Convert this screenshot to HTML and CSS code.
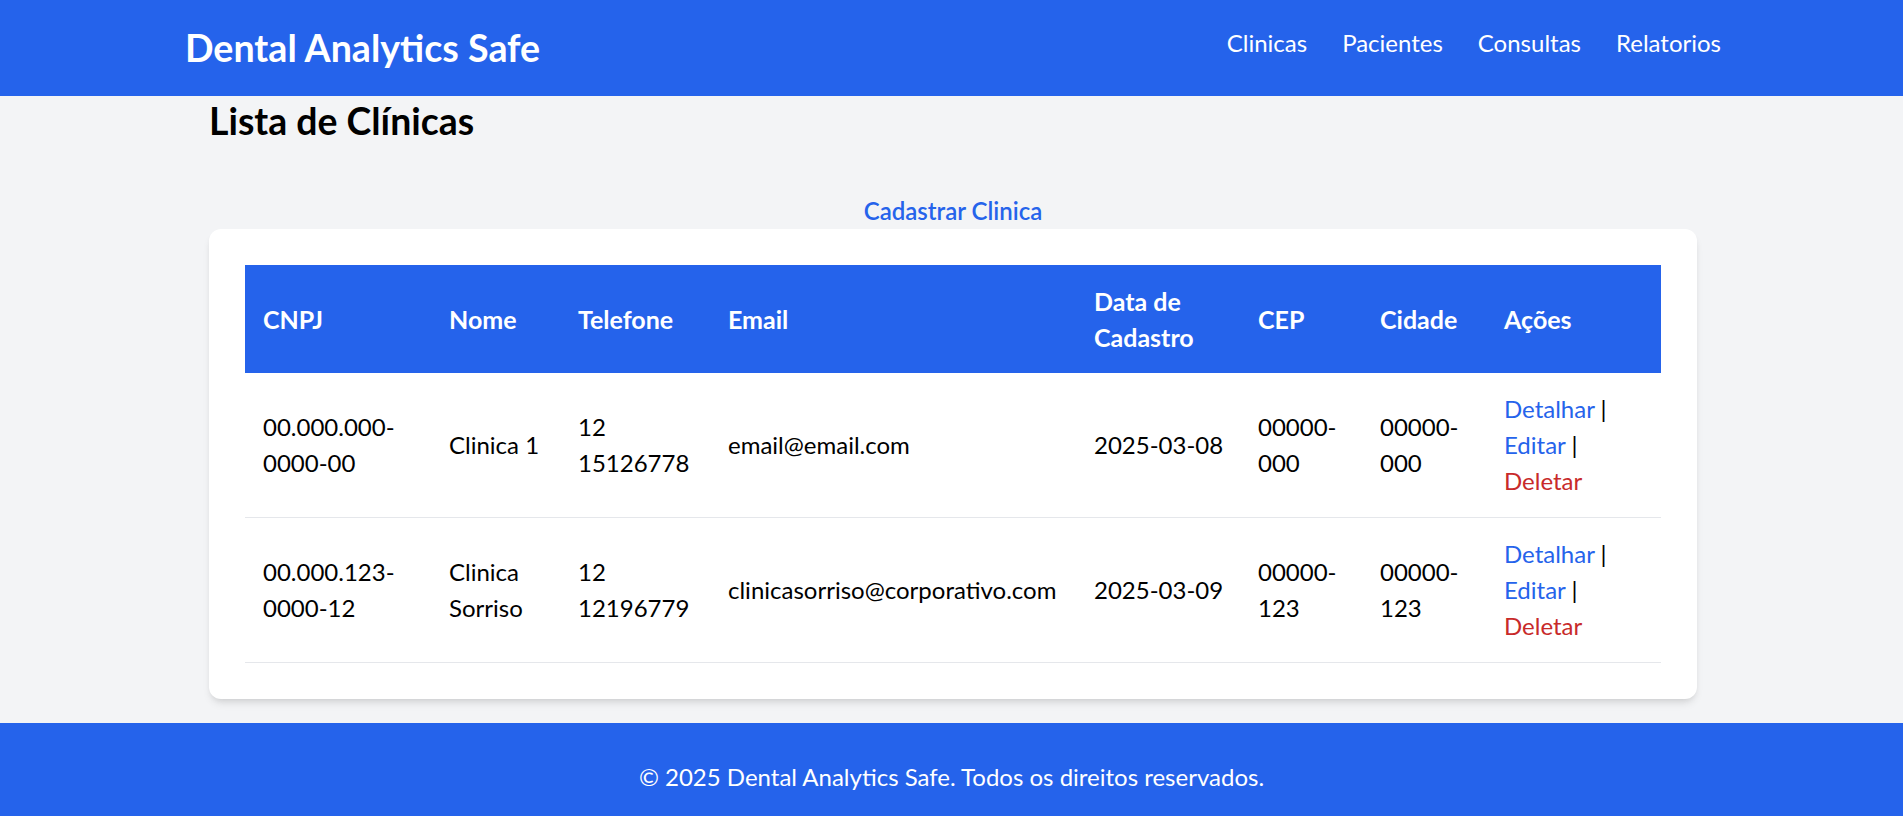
FILE: index.html
```html
<!DOCTYPE html>
<html lang="pt-BR">
<head>
<meta charset="utf-8">
<title>Lista de Clínicas - Dental Analytics Safe</title>
<link rel="stylesheet" href="styles.css">
</head>
<body>
<header class="site-header">
  <div class="header-inner">
    <a class="brand" href="#">Dental Analytics Safe</a>
    <nav class="main-nav">
      <a href="#">Clinicas</a>
      <a href="#">Pacientes</a>
      <a href="#">Consultas</a>
      <a href="#">Relatorios</a>
    </nav>
  </div>
</header>
<main class="page">
  <h1 class="page-title">Lista de Clínicas</h1>
  <div class="top-actions"><a class="add-link" href="#">Cadastrar Clinica</a></div>
  <div class="card">
    <table class="data-table">
      <colgroup>
        <col class="c-cnpj"><col class="c-nome"><col class="c-tel"><col class="c-email"><col class="c-data"><col class="c-cep"><col class="c-cidade"><col class="c-acoes">
      </colgroup>
      <thead>
        <tr><th>CNPJ</th><th>Nome</th><th>Telefone</th><th>Email</th><th>Data de Cadastro</th><th>CEP</th><th>Cidade</th><th>Ações</th></tr>
      </thead>
      <tbody>
        <tr>
          <td>00.000.000-0000-00</td><td>Clinica 1</td><td>12 15126778</td><td>email@email.com</td><td>2025-03-08</td><td>00000-000</td><td>00000-000</td>
          <td><a class="lnk" href="#">Detalhar</a> | <a class="lnk" href="#">Editar</a> | <a class="lnk lnk-del" href="#">Deletar</a></td>
        </tr>
        <tr>
          <td>00.000.123-0000-12</td><td>Clinica Sorriso</td><td>12 12196779</td><td>clinicasorriso@corporativo.com</td><td>2025-03-09</td><td>00000-123</td><td>00000-123</td>
          <td><a class="lnk" href="#">Detalhar</a> | <a class="lnk" href="#">Editar</a> | <a class="lnk lnk-del" href="#">Deletar</a></td>
        </tr>
      </tbody>
    </table>
  </div>
</main>
<footer class="site-footer">
  <p>© 2025 Dental Analytics Safe. Todos os direitos reservados.</p>
</footer>
</body>
</html>
```
FILE: styles.css
```css
* { box-sizing: border-box; }
html, body { margin: 0; padding: 0; }
body {
  background: #f3f4f6;
  font-family: Lato, "Liberation Sans", sans-serif;
  font-size: 24px;
  line-height: 36px;
  color: #000;
}
a { text-decoration: none; }

.site-header { background: #2563eb; }
.header-inner {
  width: 1536px;
  margin-left: calc(50% - 766.5px);
  display: flex;
  justify-content: space-between;
  align-items: flex-start;
  padding: 24px 0;
}
.brand {
  color: #fff;
  font-size: 37.6px;
  font-weight: 700;
  line-height: 48px;
}
.main-nav {
  display: flex;
  gap: 35px;
  margin-top: 1px;
}
.main-nav a {
  color: #fff;
  font-size: 24px;
  line-height: 36px;
}

.page {
  width: 1488px;
  margin-left: calc(50% - 742.5px);
}
.page-title {
  margin: 1px 0 48px;
  font-size: 37.4px;
  font-weight: 700;
  line-height: 48px;
}
.top-actions { text-align: center; }
.add-link {
  color: #2563eb;
  font-weight: 600;
  line-height: 36px;
}

.card {
  background: #fff;
  border-radius: 12px;
  padding: 36px;
  box-shadow: 0 6px 9px -2px rgba(0,0,0,0.1), 0 3px 6px -3px rgba(0,0,0,0.1);
}
.data-table {
  width: 100%;
  border-collapse: collapse;
  table-layout: fixed;
}
.c-cnpj { width: 186px; }
.c-nome { width: 129px; }
.c-tel { width: 150px; }
.c-email { width: 366px; }
.c-data { width: 164px; }
.c-cep { width: 122px; }
.c-cidade { width: 124px; }
.c-acoes { width: 175px; }
.data-table th {
  background: #2563eb;
  color: #fff;
  font-size: 25px;
  font-weight: 700;
  text-align: left;
  line-height: 36px;
  padding: 18px 8px 18px 18px;
  vertical-align: middle;
}
.data-table td {
  padding: 18px 8px 18px 18px;
  line-height: 36px;
  border-bottom: 1px solid #e5e7eb;
  vertical-align: middle;
}
.lnk { color: #2563eb; }
.lnk-del { color: #c82a2a; }

.site-footer {
  background: #2563eb;
  color: #fff;
  text-align: center;
  margin-top: 24px;
  padding: 36px 0;
}
.site-footer p { margin: 0; }
```
